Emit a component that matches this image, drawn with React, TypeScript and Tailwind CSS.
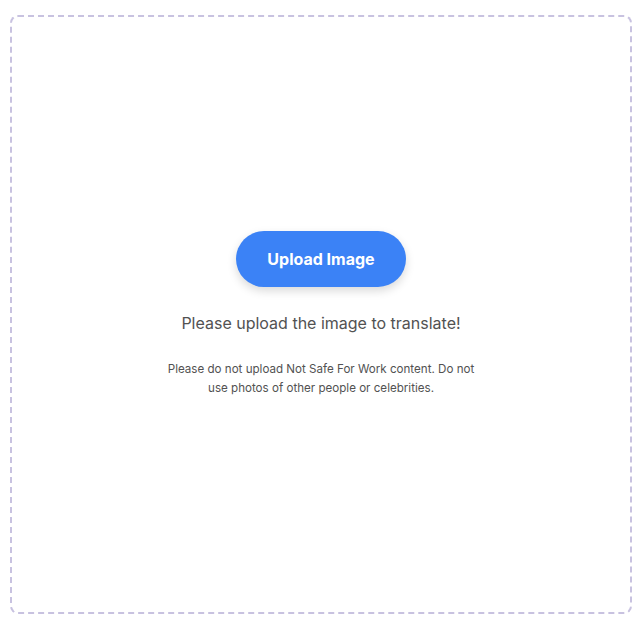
import React from 'react';

export default function App() {
  return (
    <div className="w-full h-[626px] bg-white px-[10px] pt-[15px] pb-[12px] font-['Inter',sans-serif]">
      <div className="flex h-full flex-col items-center justify-center rounded-lg border-2 border-dashed border-[#c8c2e0]">
        <button
          type="button"
          className="h-14 w-[170px] rounded-full bg-[#3b82f6] text-base font-bold text-white shadow-[0_4px_10px_rgba(0,0,0,0.15)]"
        >
          Upload Image
        </button>
        <p className="mt-[24px] text-base text-[#525252]">Please upload the image to translate!</p>
        <p className="mt-[25px] max-w-[310px] text-center text-[11.6px] leading-[19px] text-[#525252]">
          Please do not upload Not Safe For Work content. Do not use photos of other people or celebrities.
        </p>
      </div>
    </div>
  );
}
